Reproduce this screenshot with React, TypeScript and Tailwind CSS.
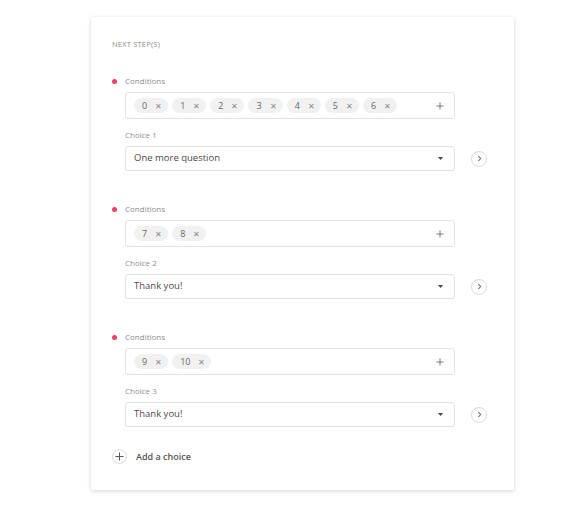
import React from 'react';

type Block = { tags: string[]; choice: string; value: string };

const BLOCKS: Block[] = [
  { tags: ['0', '1', '2', '3', '4', '5', '6'], choice: 'Choice 1', value: 'One more question' },
  { tags: ['7', '8'], choice: 'Choice 2', value: 'Thank you!' },
  { tags: ['9', '10'], choice: 'Choice 3', value: 'Thank you!' },
];

function ChevronRight() {
  return (
    <svg width="7" height="7" viewBox="0 0 8 8" fill="none" stroke="#666" strokeWidth="1.2" strokeLinecap="round" strokeLinejoin="round">
      <path d="M3 1.5 L5.5 4 L3 6.5" />
    </svg>
  );
}

function Plus({ size = 8, color = '#666' }: { size?: number; color?: string }) {
  return (
    <svg width={size} height={size} viewBox="0 0 10 10" fill="none" stroke={color} strokeWidth="1.1" strokeLinecap="round">
      <path d="M5 1 V9 M1 5 H9" />
    </svg>
  );
}

function ChoiceBlock({ block }: { block: Block }) {
  return (
    <div className="flex flex-col">
      <div className="flex items-center h-[12px]">
        <span className="w-[5px] h-[5px] rounded-full bg-[#f0406a]" />
        <span className="ml-[8px] text-[8px] leading-[12px] text-[#8c8c8c]">Conditions</span>
      </div>
      <div className="ml-[13px] mt-[5px] w-[330px] h-[27px] border border-[#e3e3e3] rounded-[3px] flex items-center pl-[8px] pr-[10px]">
        <div className="flex items-center gap-[4px]">
          {block.tags.map((t) => (
            <span key={t} className="h-[15px] rounded-full bg-[#f1f1f1] flex items-center pl-[8px] pr-[6px] text-[9px] text-[#666]">
              <span>{t}</span>
              <span className="ml-[8px] text-[8px] text-[#888]">✕</span>
            </span>
          ))}
        </div>
        <div className="ml-auto flex items-center">
          <Plus />
        </div>
      </div>
      <div className="ml-[13px] mt-[10px] text-[8px] leading-[12px] text-[#8c8c8c]">{block.choice}</div>
      <div className="ml-[13px] mt-[5px] flex items-center">
        <div className="w-[330px] h-[25px] border border-[#e3e3e3] rounded-[3px] flex items-center pl-[8px] pr-[11px]">
          <span className="text-[9.5px] text-[#4a4a4a]">{block.value}</span>
          <svg className="ml-auto" width="5" height="3" viewBox="0 0 5 3">
            <path d="M0 0 H5 L2.5 3 Z" fill="#444" />
          </svg>
        </div>
        <div className="ml-[16px] w-[16px] h-[16px] rounded-full border border-[#d9d9d9] flex items-center justify-center">
          <ChevronRight />
        </div>
      </div>
    </div>
  );
}

export default function App() {
  return (
    <div className="w-[585px] h-[526px] bg-white pt-[17px] pl-[91px]" style={{ fontFamily: '"Open Sans", "Noto Sans", sans-serif' }}>
      <div className="w-[423px] h-[473px] bg-white rounded-[2px] shadow-[0_1px_4px_rgba(0,0,0,0.18)] pl-[21px] pt-[21px]">
        <div className="text-[7.5px] leading-[12px] text-[#8c8c8c] tracking-[0.2px]">NEXT STEP(S)</div>
        <div className="mt-[25px] flex flex-col gap-[32px]">
          {BLOCKS.map((b) => (
            <ChoiceBlock key={b.choice} block={b} />
          ))}
        </div>
        <div className="mt-[22px] flex items-center">
          <div className="w-[15px] h-[15px] rounded-full border border-[#d9d9d9] flex items-center justify-center">
            <Plus size={9} color="#555" />
          </div>
          <span className="ml-[9px] text-[9px] font-semibold text-[#555]">Add a choice</span>
        </div>
      </div>
    </div>
  );
}
